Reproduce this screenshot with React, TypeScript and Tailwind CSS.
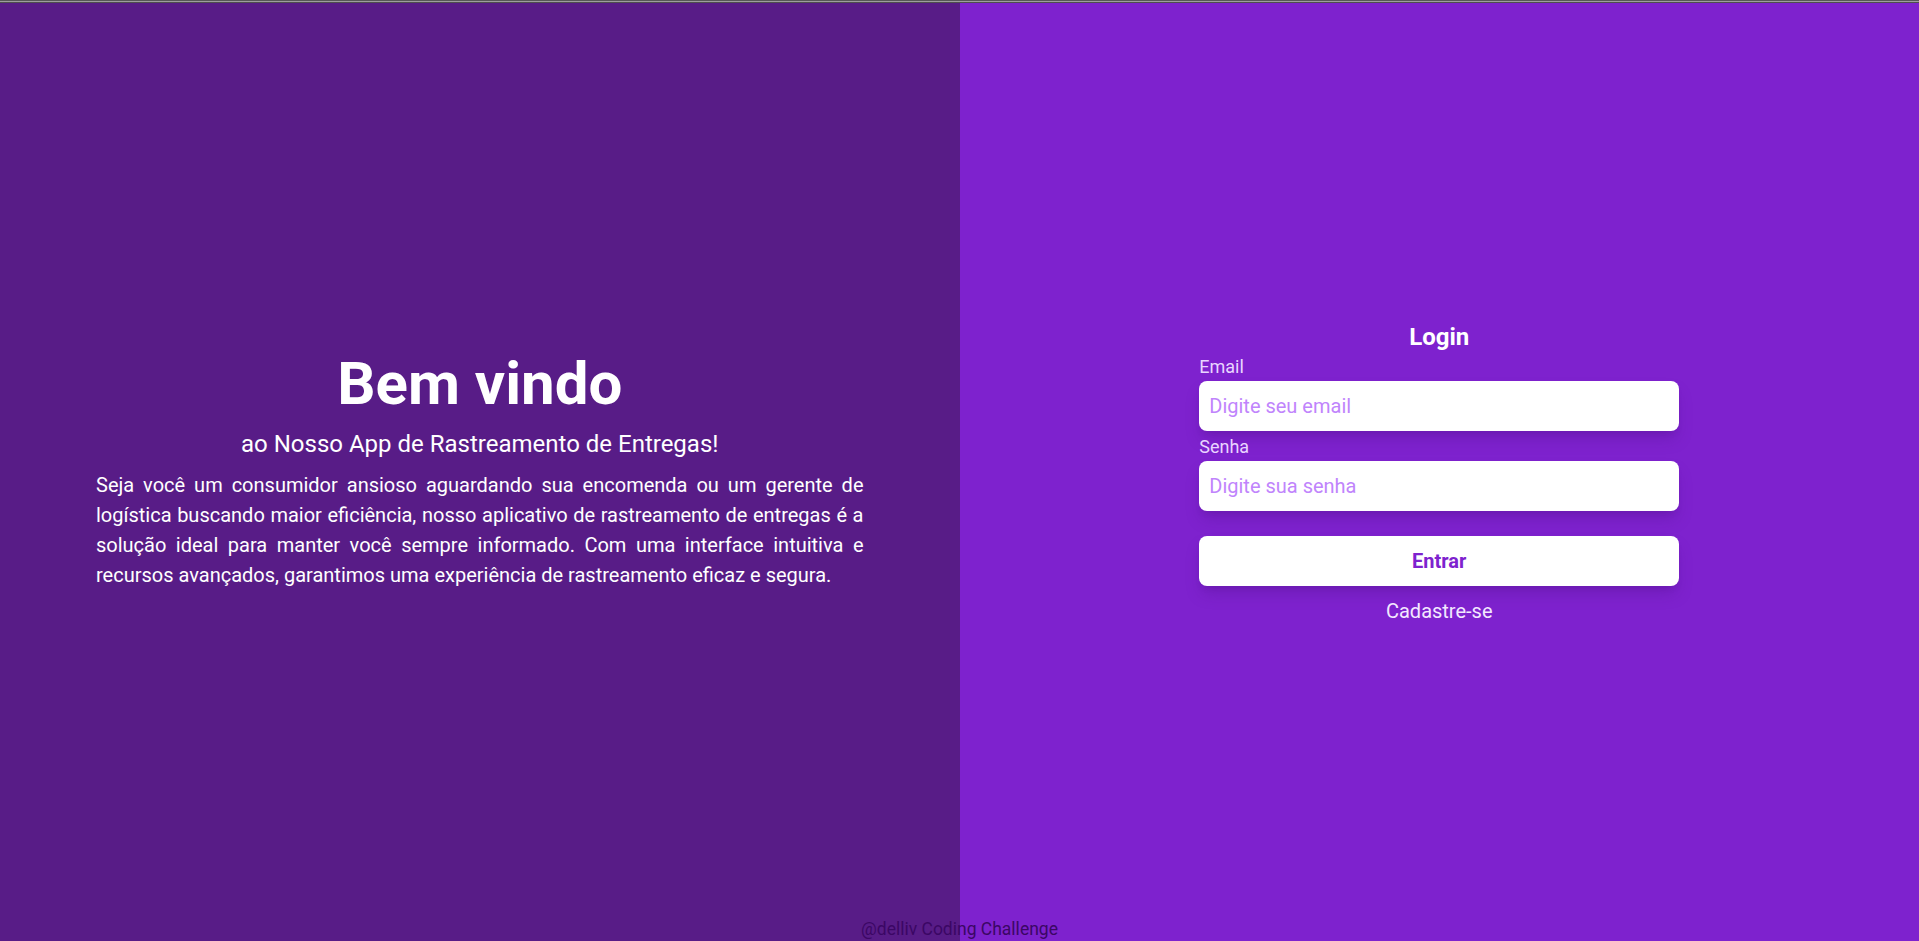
import React from "react";

export default function App() {
  return (
    <div
      className="relative w-full h-[941px] overflow-hidden flex flex-col"
      style={{ fontFamily: "Roboto, 'Noto Sans', sans-serif" }}
    >
      <div className="h-px bg-[#575757]" />
      <div className="h-px bg-[#9e9e9e]" />
      <div className="h-px bg-[#4f4f4f]" />
      <div className="flex flex-1">
        <section className="w-1/2 bg-[#581c87] flex flex-col items-center justify-center px-24 text-white">
          <h1 className="text-[60px] leading-[60px] font-bold">Bem vindo</h1>
          <h2 className="mt-[14px] text-2xl leading-8">ao Nosso App de Rastreamento de Entregas!</h2>
          <p className="mt-[10px] text-[20px] leading-[30px] text-justify">
            Seja você um consumidor ansioso aguardando sua encomenda ou um gerente de logística buscando maior
            eficiência, nosso aplicativo de rastreamento de entregas é a solução ideal para manter você sempre
            informado. Com uma interface intuitiva e recursos avançados, garantimos uma experiência de
            rastreamento eficaz e segura.
          </p>
        </section>
        <section className="w-1/2 bg-[#7e22ce] flex items-center justify-center">
          <form className="w-[480px] flex flex-col pt-[2px]" onSubmit={(e) => e.preventDefault()}>
            <h3 className="text-center text-2xl leading-8 font-bold text-white">Login</h3>
            <label className="text-[18px] leading-7 text-[#e9d5ff]">Email</label>
            <input
              type="email"
              placeholder="Digite seu email"
              className="h-[50px] w-full rounded-lg bg-white px-2.5 text-[20px] text-[#7e22ce] placeholder:text-[#c084fc] shadow-lg shadow-[#5b1596]/40 outline-none"
            />
            <label className="mt-0.5 text-[18px] leading-7 text-[#e9d5ff]">Senha</label>
            <input
              type="password"
              placeholder="Digite sua senha"
              className="h-[50px] w-full rounded-lg bg-white px-2.5 text-[20px] text-[#7e22ce] placeholder:text-[#c084fc] shadow-lg shadow-[#5b1596]/40 outline-none"
            />
            <button
              type="submit"
              className="mt-[25px] h-[50px] w-full rounded-lg bg-white text-[20px] font-bold text-[#7e22ce] shadow-lg shadow-[#5b1596]/40"
            >
              Entrar
            </button>
            <a className="mt-[11px] text-center text-[20px] leading-7 text-[#f3e8ff] cursor-pointer">Cadastre-se</a>
          </form>
        </section>
      </div>
      <footer className="absolute bottom-0 left-0 right-0 flex justify-center">
        <span className="text-[17.5px] leading-6 text-[#3b0764]">@delliv Coding Challenge</span>
      </footer>
    </div>
  );
}
